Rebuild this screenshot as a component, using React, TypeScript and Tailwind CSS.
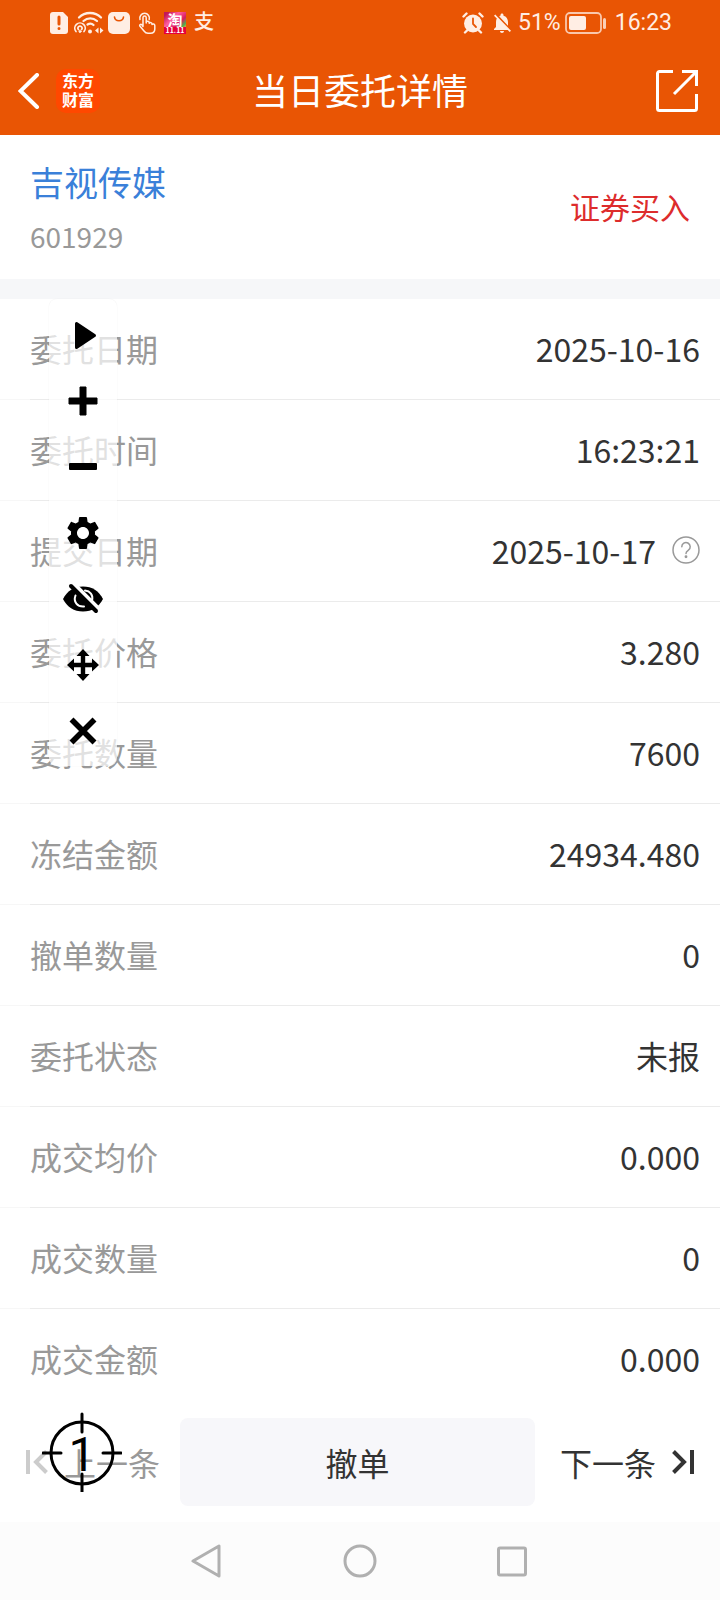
import type { ReactNode } from 'react';
import { MdNotificationsOff, MdSettings } from 'react-icons/md';

type Detail = { label: string; value: string; help?: boolean };

const details: Detail[] = [
  { label: '委托日期', value: '2025-10-16' },
  { label: '委托时间', value: '16:23:21' },
  { label: '提交日期', value: '2025-10-17', help: true },
  { label: '委托价格', value: '3.280' },
  { label: '委托数量', value: '7600' },
  { label: '冻结金额', value: '24934.480' },
  { label: '撤单数量', value: '0' },
  { label: '委托状态', value: '未报' },
  { label: '成交均价', value: '0.000' },
  { label: '成交数量', value: '0' },
  { label: '成交金额', value: '0.000' },
];

function StatusBar() {
  return (
    <div className="flex h-[46px] items-center justify-between pl-[50px] pr-12 text-[#ffeee4]">
      <div className="flex items-center">
        <svg width="18" height="22" viewBox="0 0 18 22">
          <path fill="currentColor" d="M3 0h10l5 5v14a3 3 0 0 1-3 3H3a3 3 0 0 1-3-3V3a3 3 0 0 1 3-3z" />
          <path stroke="#e95504" strokeWidth="3" strokeLinecap="round" d="M9 5v7M9 16.500v.1" />
        </svg>
        <svg className="ml-1.5" width="30" height="24" viewBox="0 0 30 24" fill="none" stroke="currentColor" strokeWidth="2.300" strokeLinecap="round">
          <path d="M5 6.500C11 .5 21 .5 27 6.500M9.500 10C13.500 6.500 19 6.500 23 10" />
          <path d="M13.500 13.500c2-1.200 4.500-1 6 .5" />
          <path strokeWidth="1.700" d="M2 20.500a5.200 5.200 0 1 1 8 0M4.500 18.500a2 2 0 1 1 3 0" />
          <circle cx="6" cy="20.500" r="1" fill="currentColor" strokeWidth="1" />
          <circle cx="16" cy="20.500" r="2" fill="currentColor" stroke="none" />
          <path fill="currentColor" stroke="none" d="M24.500 16.500v6l-3.500-3zM26 16.500v6l3.500-3z" />
        </svg>
        <svg className="ml-1" width="22" height="22" viewBox="0 0 22 22">
          <rect width="22" height="22" rx="5" fill="currentColor" />
          <path fill="none" stroke="#e95504" strokeWidth="1.600" strokeLinecap="round" d="M6.500 5c.5 5 8.500 5 9 0" />
        </svg>
        <svg className="ml-2" width="18" height="22" viewBox="0 0 18 22" fill="none" stroke="currentColor" strokeWidth="1.500" strokeLinecap="round" strokeLinejoin="round">
          <path d="M2 7.500a4.800 4.800 0 1 1 9.200 0" />
          <path d="M5 14.500V5.500a1.600 1.600 0 0 1 3.200 0V11V9.800c.8-1 2.700-.8 3 .5v1c.8-1.200 2.600-.8 2.800.5v.7c.8-1 2.700-.6 2.800 1V17c0 2.500-1.800 4.200-4.300 4.200H10c-2 0-3-.8-4-2.200l-4.200-5c-.6-1.200.9-2.300 2-1.300z" />
        </svg>
        <span className="ml-2 flex size-[22px] flex-col items-center bg-[linear-gradient(135deg,#c2185b_10%,#ff5fa0_35%,#d81b60_60%,#4caf50_75%,#f9a825_85%)] text-white">
          <span className="text-[15px] leading-[15px] font-bold">淘</span>
          <span className="w-full bg-[#e5003c] text-center text-[7px] leading-[7px] font-bold">11.11</span>
        </span>
        <span className="ml-2 pb-1 text-xl leading-5 font-medium">支</span>
      </div>
      <div className="flex items-center font-[Roboto,sans-serif] text-[23px] leading-6">
        <svg width="22" height="22" viewBox="0 0 22 22">
          <circle cx="11" cy="11.500" r="9" fill="currentColor" />
          <path stroke="currentColor" strokeWidth="2.400" strokeLinecap="round" d="M1.500 4.500l3-3M20.500 4.500l-3-3M5 18.500l-2 2M17 18.500l2 2" />
          <path fill="none" stroke="#e95504" strokeWidth="1.800" strokeLinecap="round" d="M11 6.500v5.500l3 3" />
        </svg>
        <MdNotificationsOff className="ml-1.5 size-6" />
        <span className="ml-1">51%</span>
        <svg className="ml-1" width="42" height="22" viewBox="0 0 42 22">
          <rect x="1" y="1" width="35" height="20" rx="4" fill="none" stroke="currentColor" strokeOpacity=".75" strokeWidth="1.800" />
          <rect x="4" y="4" width="17" height="14" rx="2" fill="currentColor" />
          <rect x="38" y="6" width="3" height="11" rx="1.500" fill="currentColor" fillOpacity=".8" />
        </svg>
        <span className="ml-2">16:23</span>
      </div>
    </div>
  );
}

function TitleBar() {
  return (
    <div className="grid h-[89px] grid-cols-[1fr_auto_1fr] items-center px-[18px] text-white">
      <div className="flex items-center">
        <button type="button" aria-label="返回">
          <svg width="22" height="36" viewBox="0 0 22 36" fill="none" stroke="currentColor" strokeWidth="4" strokeLinecap="round">
            <path d="M19 2L2.500 18 19 34" />
          </svg>
        </button>
        <div className="ml-4 flex size-11 flex-col items-center justify-center rounded-[10px] bg-[#ff4800] pb-0.5 text-base leading-[19px] font-bold">
          <span>东方</span>
          <span>财富</span>
        </div>
      </div>
      <h1 className="pb-1 text-4xl leading-10">当日委托详情</h1>
      <button type="button" aria-label="分享" className="mr-1 justify-self-end">
        <svg width="42" height="42" viewBox="0 0 42 42" fill="none" stroke="currentColor" strokeWidth="3">
          <path d="M17 1.500H3.500a2 2 0 0 0-2 2v35a2 2 0 0 0 2 2h35a2 2 0 0 0 2-2V24M26 1.500h14.500V16M40 2L18 24" />
        </svg>
      </button>
    </div>
  );
}

function DetailRow({ label, value, help }: Detail) {
  return (
    <div className="group">
      <div className="flex h-[100px] items-center justify-between pr-5 pb-0.5 pl-[30px] text-[32px] leading-10">
        <dt className="text-[#999]">{label}</dt>
        <dd className="flex items-center text-[#333]">
          {value}
          {help && (
            <button type="button" aria-label="说明" className="ml-4 text-[#999]">
              <svg width="28" height="28" viewBox="0 0 28 28" fill="none" stroke="currentColor" strokeWidth="1.500" strokeLinecap="round">
                <circle cx="14" cy="14" r="13" />
                <path d="M9.800 10.800a4.200 4.200 0 1 1 6.600 3.400c-1.500 1-2.400 1.500-2.400 3.300" />
                <circle cx="14" cy="20.800" r=".7" fill="currentColor" />
              </svg>
            </button>
          )}
        </dd>
      </div>
      <div className="flex h-px group-last:invisible">
        <div className="w-[30px] bg-[#f7f7f7]" />
        <div className="flex-1 bg-[#ebebeb]" />
      </div>
    </div>
  );
}

function ToolButton({ label, children }: { label: string; children: ReactNode }) {
  return (
    <button type="button" aria-label={label} className="flex h-[66px] w-full items-center justify-center">
      {children}
    </button>
  );
}

// Floating auto-clicker toolbar
function FloatingTools() {
  return (
    <div className="absolute top-0 left-[49px] w-[68px] rounded-lg bg-white/70 pt-[3px] pb-0.5 text-black shadow-[0_0_1px_rgba(0,0,0,0.12)]">
      <ToolButton label="开始">
        <svg width="40" height="40" viewBox="0 0 40 40">
          <path fill="currentColor" stroke="currentColor" strokeWidth="3" strokeLinejoin="round" d="M13.500 8.500v24l18-12z" />
        </svg>
      </ToolButton>
      <ToolButton label="添加">
        <svg width="30" height="30" viewBox="0 0 30 30">
          <path fill="currentColor" stroke="currentColor" strokeLinejoin="round" d="M12 1h6v11h11v6H18v11h-6V18H1v-6h11z" />
        </svg>
      </ToolButton>
      <ToolButton label="减少">
        <svg width="28" height="8" viewBox="0 0 28 8">
          <rect width="28" height="7" rx="1" fill="currentColor" />
        </svg>
      </ToolButton>
      <ToolButton label="设置">
        <MdSettings className="size-10" />
      </ToolButton>
      <ToolButton label="隐藏">
        <svg width="40" height="32" viewBox="0 0 40 32">
          <path fill="currentColor" d="M0 16C4 8 11 3.500 20 3.500S36 8 40 16C36 24 29 28.500 20 28.500S4 24 0 16z" />
          <path fill="none" stroke="#fff" strokeWidth="2" strokeLinecap="round" d="M12.500 12.500C10 19 14.500 24 21 23.500M22 7.500c5 .5 8.500 4.500 7 10" />
          <path stroke="#fff" strokeWidth="4" d="M11 1l24 24" />
          <path stroke="currentColor" strokeWidth="4" strokeLinecap="round" d="M8 3l25 25" />
        </svg>
      </ToolButton>
      <ToolButton label="移动">
        <svg width="32" height="32" viewBox="0 0 32 32">
          <path fill="currentColor" d="M16 0l6.500 7h-4.300v6.800H25V9.500l7 6.500-7 6.500v-4.300h-6.800V25h4.300L16 32l-6.500-7h4.300v-6.800H7v4.300L0 16l7-6.500v4.300h6.800V7H9.500z" />
        </svg>
      </ToolButton>
      <ToolButton label="关闭">
        <svg width="28" height="28" viewBox="0 0 28 28">
          <path stroke="currentColor" strokeWidth="5.600" d="M2.500 2.500l23 23M25.500 2.500l-23 23" />
        </svg>
      </ToolButton>
    </div>
  );
}

function TapTarget() {
  return (
    <div className="absolute top-0.5 left-[42px] flex size-20 items-center justify-center text-black">
      <svg className="absolute inset-0" width="80" height="80" viewBox="0 0 80 80" fill="none" stroke="currentColor" strokeWidth="3" strokeLinecap="round">
        <circle cx="40" cy="41" r="31" />
        <path d="M40 2v18M40 62v18M1 41h18M61 41h18" />
      </svg>
      <span className="pt-1.5 font-[Roboto,sans-serif] text-5xl leading-20">1</span>
    </div>
  );
}

export default function App() {
  return (
    <div className="flex min-h-screen flex-col bg-white font-['Noto_Sans_CJK_SC',sans-serif]">
      <header className="bg-[#e95504]">
        <StatusBar />
        <TitleBar />
      </header>

      <section className="flex h-36 items-center justify-between px-[30px]">
        <div className="pt-0.5">
          <a href="#" className="block text-[34px] leading-[56px] text-[#3a80d9]">吉视传媒</a>
          <p className="text-[28px] leading-[52px] text-[#999]">601929</p>
        </div>
        <span className="pb-0.5 text-[30px] leading-10 text-[#dd2c2c]">证券买入</span>
      </section>

      <div className="h-5 bg-[#f6f7f9]" />

      <main className="relative">
        <dl>
          {details.map(d => (
            <DetailRow key={d.label} {...d} />
          ))}
        </dl>
        <FloatingTools />
      </main>

      <div className="relative flex h-28 pt-2 pb-4 text-[32px] leading-10 text-[#333]">
        <button type="button" disabled className="flex w-[180px] items-center pl-[26px] text-[#999]">
          <svg width="22" height="24" viewBox="0 0 22 24" fill="none" stroke="#ccc" strokeWidth="4">
            <path d="M2 0v24M20.500 1.500L10 12l10.500 10.500" />
          </svg>
          <span className="ml-4">上一条</span>
        </button>
        <button type="button" className="flex-1 rounded-lg bg-[#f7f7fa]">撤单</button>
        <button type="button" className="flex w-[185px] items-center justify-end pr-[26px]">
          <span className="mr-4">下一条</span>
          <svg width="22" height="24" viewBox="0 0 22 24" fill="none" stroke="currentColor" strokeWidth="4">
            <path d="M20 0v24M1.500 1.500L12 12 1.500 22.500" />
          </svg>
        </button>
        <TapTarget />
      </div>

      <nav className="flex flex-1 items-center justify-center gap-[118px] bg-[#fcfcfc] text-[#b0b0b0]">
        <button type="button" aria-label="后退">
          <svg width="34" height="34" viewBox="0 0 34 34" fill="none" stroke="currentColor" strokeWidth="3" strokeLinejoin="round">
            <path d="M28 2v30L2 17z" />
          </svg>
        </button>
        <button type="button" aria-label="主页">
          <svg width="34" height="34" viewBox="0 0 34 34" fill="none" stroke="currentColor" strokeWidth="3">
            <circle cx="17" cy="17" r="15" />
          </svg>
        </button>
        <button type="button" aria-label="最近任务">
          <svg width="34" height="34" viewBox="0 0 34 34" fill="none" stroke="currentColor" strokeWidth="3">
            <rect x="3.500" y="4" width="27" height="27" rx="1.500" />
          </svg>
        </button>
      </nav>
    </div>
  );
}
